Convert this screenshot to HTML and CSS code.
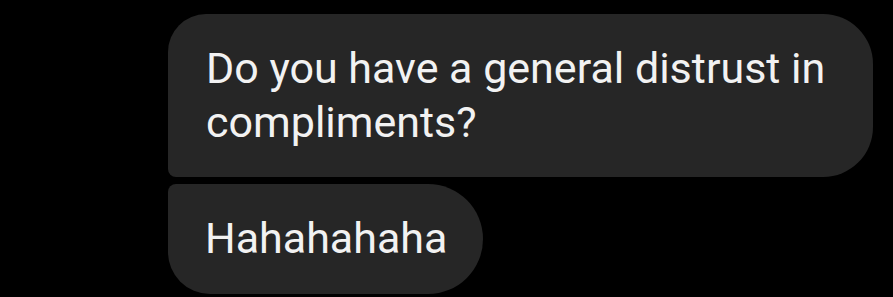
FILE: index.html
```html
<!DOCTYPE html>
<html>
<head>
<meta charset="utf-8">
<link rel="stylesheet" href="styles.css">
</head>
<body>
<div class="thread">
  <div class="bubble first">Do you have a general distrust in compliments?</div>
  <div class="bubble last">Hahahahaha</div>
</div>
</body>
</html>
```
FILE: styles.css
```css
html, body {
  margin: 0;
  padding: 0;
  background: #000;
}
body {
  width: 893px;
  height: 297px;
  overflow: hidden;
}
.thread {
  display: flex;
  flex-direction: column;
  align-items: flex-start;
  gap: 7px;
  padding: 14px 0 0 168px;
}
.bubble {
  box-sizing: border-box;
  max-width: 705px;
  background: #262626;
  color: #f2f2f2;
  font-family: Roboto, "Noto Sans", sans-serif;
  font-size: 43px;
  line-height: 54px;
  padding: 27px 38px 29px 38px;
}
.bubble.first {
  border-radius: 38px 50px 50px 8px;
  padding-bottom: 28px;
}
.bubble.last {
  border-radius: 8px 55px 55px 42px;
  padding-left: 37px;
  padding-right: 36px;
}
```
